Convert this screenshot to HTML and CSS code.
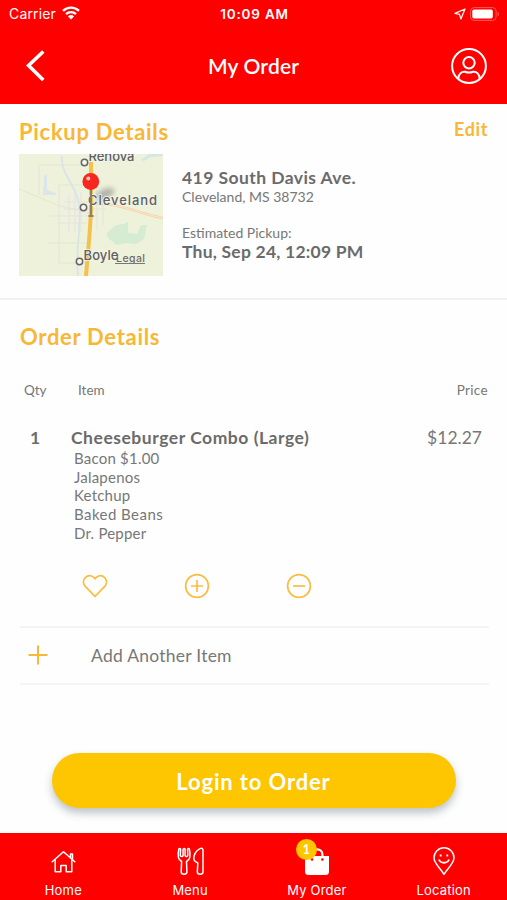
FILE: index.html
```
<!DOCTYPE html>
<html lang="en">
<head>
<meta charset="utf-8">
<title>My Order</title>
<link rel="stylesheet" href="styles.css">
</head>
<body>
<div class="app">
  <header class="header">
    <div class="status">
      <div class="status-left"><span class="carrier">Carrier</span>
        <svg class="wifi" viewBox="0 0 18 14"><g fill="none" stroke="#fff" stroke-width="2.3"><path d="M1 4.9a11.4 11.4 0 0 1 16 0"/><path d="M4 8.2a7.2 7.2 0 0 1 10 0"/></g><path d="M9 13.6 5.9 10.4a4.4 4.4 0 0 1 6.2 0z" fill="#fff"/></svg>
      </div>
      <span class="time">10:09 AM</span>
      <div class="status-right">
        <svg class="arrow" viewBox="0 0 12 12"><path d="M11 1 1 5.4l4.500.9L6.900 11z" fill="none" stroke="#fff" stroke-width="1.200" stroke-linejoin="round"/></svg>
        <svg class="battery" viewBox="0 0 30 14"><rect x=".6" y=".6" width="25.500" height="12.800" rx="3.500" fill="none" stroke="#ff5a5a" stroke-width="1"/><rect x="2.300" y="2.600" width="20.500" height="8.800" rx="1.600" fill="#fff"/><path d="M27.600 4.700c1.800.8 1.800 3.800 0 4.600z" fill="#ff5a5a"/></svg>
      </div>
    </div>
    <div class="bar">
      <svg class="back" viewBox="0 0 20 34"><path d="M17.300 2.500 2.600 16.500 17.300 31" fill="none" stroke="#fff" stroke-width="3.600"/></svg>
      <h1 class="title">My Order</h1>
      <svg class="profile" viewBox="0 0 36 36" fill="none" stroke="#fff" stroke-width="2"><circle cx="18" cy="18" r="16.900"/><circle cx="18" cy="14.700" r="5.700"/><path d="M7.300 31c0-5 3.200-7.600 6.600-7.300 2.300.9 5.900.9 8.200 0 3.400-.3 6.600 2.300 6.600 7.300"/></svg>
    </div>
  </header>

  <section class="pickup">
    <div class="pickup-head"><h2 class="heading">Pickup Details</h2><a class="edit">Edit</a></div>
    <div class="pickup-body">
      <svg class="map" viewBox="0 0 144 122">
        <rect width="144" height="122" fill="#eef2da"/>
        <path d="M122 6l8-6h14v2l-12 1-7 4z" fill="#d3e8e0"/>
        <path d="M88 79l9-8 8-1 4-2v11l9 1 4-9h6l-3 14-8 5-10-1-9 2-9-7z" fill="#d5ebd2"/>
        <path d="M25 22l3-2v16l9 3v2H24z" fill="#dbe5ea"/>
        <path d="M40 38h40v24H62v14H48l-8-10z" fill="#f1efe3" opacity=".7"/>
        <g fill="none" stroke="#e4e5d7" stroke-width="1"><path d="M20 11h46M20 11v30M0 35l38 16 32 8M40 31h34M40 31v78M40 109h26M29 89h40M38 69h30M45 48h36M45 55h42M46 62h32M50 40v38M56 35v43M62 38v40M78 36v40M84 40v32M30 62h16"/></g>
        <path d="M43 2c-2 14 10 26 14 38 6 15 3 24 3 40-2 15-2 26-1 42" fill="none" stroke="#d9e4ea" stroke-width="1.800"/>
        <path d="M72 50c28-2 45 9 72 14" fill="none" stroke="#f5d2ac" stroke-width="2.400"/><path d="M72 50c28-2 45 9 72 14" fill="none" stroke="#fbe9c8" stroke-width="1"/>
        <path d="M72 8v48c-1 24-3 42-5 66" fill="none" stroke="#f5c14c" stroke-width="4"/>
        <ellipse cx="86" cy="40" rx="10" ry="5" transform="rotate(-25 86 40)" class="pin-shadow"/>
        <g class="map-label"><text x="69.500" y="6.500" textLength="46">Renova</text><text x="69" y="51" textLength="69">Cleveland</text><text x="64.500" y="106" textLength="35">Boyle</text></g>
        <text x="97" y="108" textLength="29" class="legal">Legal</text>
        <path d="M96 109.500h30" stroke="#777" stroke-width="1"/>
        <g fill="#f6f6ee" stroke="#666" stroke-width="1.500"><circle cx="65.500" cy="8.500" r="3.200"/><circle cx="64.500" cy="53.500" r="3.200"/><circle cx="60.500" cy="107.500" r="3.200"/></g>
        <path d="M72 34v28M69.500 62h5" stroke="#8d8468" stroke-width="2"/>
        <circle cx="71.800" cy="27.500" r="8.400" fill="#f5271f"/><circle cx="69.300" cy="24.500" r="2" fill="#ffc4bd"/>
      </svg>
      <div class="address">
        <p class="strong street">419 South Davis Ave.</p>
        <p class="small">Cleveland, MS 38732</p>
        <p class="small gap">Estimated Pickup:</p>
        <p class="strong date">Thu, Sep 24, 12:09 PM</p>
      </div>
    </div>
  </section>

  <section class="order">
    <h2 class="heading">Order Details</h2>
    <div class="row labels"><span class="qty">Qty</span><span class="item">Item</span><span class="price-label">Price</span></div>
    <div class="row line"><b class="qty">1</b><span class="name">Cheeseburger Combo (Large)</span><span class="price">$12.27</span></div>
    <ul class="options"><li>Bacon $1.00</li><li>Jalapenos</li><li>Ketchup</li><li class="wide">Baked Beans</li><li>Dr. Pepper</li></ul>
    <div class="actions">
      <svg viewBox="0 0 26 26"><path d="M13 23.300 3 13.200C-1.500 7.200 5.500-.5 11.500 4.200L13 5.700l1.500-1.500C20.500-.5 27.500 7.200 23 13.200z"/></svg>
      <svg viewBox="0 0 26 26"><circle cx="13" cy="13" r="11.400"/><path d="M7 13h12M13 7v12"/></svg>
      <svg viewBox="0 0 26 26"><circle cx="13" cy="13" r="11.400"/><path d="M7 13h12"/></svg>
    </div>
    <div class="add"><svg viewBox="0 0 20 20"><path d="M.5 10h19M10 .5v19"/></svg><span>Add Another Item</span></div>
  </section>

  <button class="login">Login to Order</button>

  <nav class="nav">
    <a class="tab"><svg class="ico" viewBox="0 0 30 30"><path d="M4.200 15.700 15.500 5.700l11.300 10M7.200 14v11.700h5.600v-6.300h5.400v6.300h5.600V14M22.500 11.500V8h2v5" fill="none" stroke="#fff" stroke-width="1.500" stroke-linejoin="round" stroke-linecap="round"/></svg><span>Home</span></a>
    <a class="tab"><svg class="ico" viewBox="0 0 30 30"><path d="M5.600 3.300c.1-1-1.500-1.200-1.800 0-.6 2.500-.9 5-.4 8 .4 2 1.800 3.300 3.200 4.200L6.200 26c0 2.900 5.700 2.900 5.700 0l-.4-10.500c1.500-.9 2.900-2.200 3.300-4.200.5-3 .2-5.500-.4-8-.3-1.200-1.900-1-1.800 0l.2 6.200M5.600 3.300 5.300 9.500M8.100 10V3.400c0-1.300 2-1.300 2 0V10M5.300 9.500c.2 1.400 2.500 1.400 2.800 0M10.100 9.500c.3 1.400 2.500 1.400 2.700 0M28 4.200c0-1.800-1.300-2.400-3-1.500-3.600 2-6.200 6.300-6.200 10.300 0 2.200 2 2.700 4 4.200L22.300 26c0 2.900 5.700 2.900 5.700 0z" fill="none" stroke="#fff" stroke-width="1.500" stroke-linejoin="round"/></svg><span>Menu</span></a>
    <a class="tab"><span class="bag"><svg class="ico" viewBox="0 0 30 30"><path d="M3 10h24v15.500a3.500 3.500 0 0 1-3.500 3.500h-17A3.500 3.500 0 0 1 3 25.500z" fill="#fff"/><path d="M10 13V8.500a5.200 5.200 0 0 1 10.400 0V13" fill="none" stroke="#fff" stroke-width="2.200"/><circle cx="10" cy="13.500" r="1.300" fill="red"/><circle cx="20.400" cy="13.500" r="1.300" fill="red"/></svg><span class="badge">1</span></span><span>My Order</span></a>
    <a class="tab"><svg class="ico" viewBox="0 0 30 30" fill="none" stroke="#fff" stroke-width="1.500"><path d="M15 28.300C10.500 21.300 5 17.300 5 11.800a10 10 0 0 1 20 0c0 5.500-5.500 9.500-10 16.500z" stroke-linejoin="round"/><path d="M10 13.500c1.500 4.300 8.500 4.300 10 0M11.700 8.500v2M18.300 8.500v2" stroke-width="1.800"/></svg><span>Location</span></a>
  </nav>
</div>
</body>
</html>
```
FILE: styles.css
```
* { box-sizing: border-box; }
body { margin: 0; background: #fefefe; font-family: Lato, "Liberation Sans", sans-serif; color: #6b6b6b; }
h1, h2, p, ul { margin: 0; padding: 0; font-weight: inherit; }
svg { display: block; flex: none; }
.app { width: 507px; height: 900px; display: flex; flex-direction: column; overflow: hidden; }

.header { height: 104px; background: #f00; color: #fff; flex: none; }
.status { height: 28px; padding: 0 7px 0 9px; display: grid; grid-template-columns: 1fr auto 1fr; align-items: center; font: 14px/28px Inter, sans-serif; }
.status-left { display: flex; align-items: center; gap: 6px; }
.carrier { letter-spacing: .15px; }
.wifi { width: 18px; height: 14px; margin-top: -2px; }
.time { font-weight: 600; font-size: 13.500px; letter-spacing: .8px; }
.status-right { display: flex; align-items: center; justify-content: flex-end; gap: 4px; margin-top: -1px; }
.arrow { width: 12px; height: 12px; }
.battery { width: 30px; height: 14px; }
.bar { height: 75px; padding: 0 20px 0 26px; display: grid; grid-template-columns: 1fr auto 1fr; align-items: center; }
.back { width: 20px; height: 34px; }
.title { font-size: 21px; line-height: 28px; font-weight: 600; letter-spacing: .15px; margin-left: -6px; }
.profile { width: 36px; height: 36px; justify-self: end; }

.pickup { height: 196px; flex: none; padding: 14px 19px 0; border-bottom: 2px solid #f1f1f1; }
.pickup-head { display: flex; justify-content: space-between; height: 28px; }
.heading { font-size: 22px; line-height: 28px; font-weight: 700; letter-spacing: .7px; color: #f8b734; }
.edit { font-size: 18px; line-height: 26px; font-weight: 700; letter-spacing: .6px; color: #f8b734; margin-top: -2px; }
.pickup-body { display: flex; gap: 19px; margin-top: 8px; }
.map { width: 144px; height: 122px; }
.pin-shadow { fill: #777; opacity: .5; filter: blur(2.500px); }
.map-label { font: 500 13px Inter, sans-serif; fill: #606060; stroke: #f5f5ec; stroke-width: 1.500px; paint-order: stroke; }
.legal { font: 500 10.500px Inter, sans-serif; fill: #6c6c6c; }
.address { padding-top: 13px; }
.strong { font-size: 17.500px; line-height: 22px; font-weight: 700; }
.street { letter-spacing: .43px; }
.date { letter-spacing: .22px; }
.small { font-size: 14px; line-height: 16px; color: #777; }
.gap { margin-top: 20px; }

.order { padding: 23px 18px 0 20px; flex: none; }
.row { display: flex; justify-content: space-between; }
.labels { margin-top: 29px; padding: 0 1px 0 4px; font-size: 13.500px; line-height: 20px; color: #777; }
.qty { flex: none; }
.labels .qty { width: 54px; }
.item, .name { flex: 1; }
.price-label { letter-spacing: .35px; }
.line { margin-top: 27px; padding: 0 7px 0 10px; font-size: 17.500px; line-height: 22px; }
.line .qty { width: 41px; }
.name { font-weight: 700; letter-spacing: .53px; }
.price { color: #777; }
.options { list-style: none; padding-left: 54px; font-size: 15px; line-height: 18.700px; letter-spacing: .22px; color: #777; }
.wide { letter-spacing: .45px; }
.actions { display: flex; gap: 76px; padding: 30px 0 0 62px; }
.actions svg { width: 26px; height: 26px; fill: none; stroke: #f9bd42; stroke-width: 1.700; }
.add { margin-top: 27px; height: 59px; display: flex; align-items: center; gap: 43px; padding-left: 8px; border-top: 2px solid #f4f4f4; border-bottom: 2px solid #f4f4f4; font-size: 17.500px; letter-spacing: .25px; color: #777; }
.add svg { width: 20px; height: 20px; stroke: #f9b938; stroke-width: 2; }
.login { margin: auto auto 25px; padding: 2px 0 0; width: 404px; height: 55px; border: 0; border-radius: 28px; background: #fdc600; color: #fff; font: 700 22px Lato, sans-serif; letter-spacing: .85px; box-shadow: 0 5px 9px rgba(40, 60, 70, .3); flex: none; }

.nav { height: 67px; flex: none; background: #f00; color: #fff; display: grid; grid-template-columns: repeat(4, 1fr); font: 13px/16px Inter, sans-serif; letter-spacing: .2px; }
.tab { display: flex; flex-direction: column; align-items: center; padding-top: 13px; }
.ico { width: 30px; height: 30px; }
.tab > span:last-child { margin-top: 6px; }
.bag { position: relative; }
.badge { position: absolute; left: -6px; top: -7px; width: 21px; height: 21px; border-radius: 50%; background: #fdc600; text-align: center; font: 700 13px/21px Lato, sans-serif; }
```
